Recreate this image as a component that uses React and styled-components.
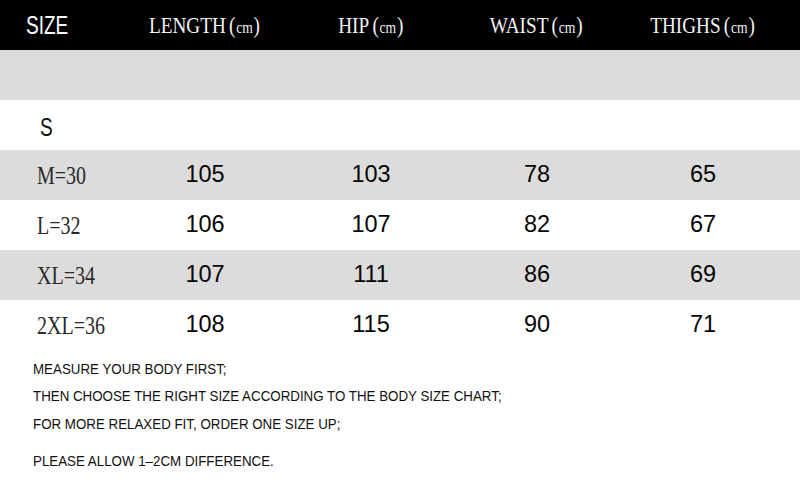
import React from "react";
import styled, { createGlobalStyle } from "styled-components";

const Global = createGlobalStyle`
  html, body { margin: 0; padding: 0; background: #ffffff; }
  body { width: 800px; height: 500px; overflow: hidden; }
`;

const Page = styled.div`
  width: 800px;
  height: 500px;
  background: #ffffff;
  display: flex;
  flex-direction: column;
`;

const Row = styled.div`
  display: grid;
  grid-template-columns: 122px repeat(4, 166px) 1fr;
  height: 50px;
  align-items: center;
  background: ${(p) => (p.$tone === "dark" ? "#000000" : p.$tone === "grey" ? "#dcdcdc" : "#ffffff")};
`;

const LabelCell = styled.div`
  padding-left: ${(p) => p.$pad}px;
  display: flex;
  align-items: center;
  height: 100%;
  padding-top: ${(p) => p.$drop || 0}px;
  box-sizing: border-box;
`;

const Cell = styled.div`
  display: flex;
  justify-content: center;
  align-items: center;
  height: 100%;
`;

const NarrowSans = styled.span`
  display: inline-block;
  font-family: "Liberation Sans", Arial, sans-serif;
  font-size: 25px;
  line-height: 1;
  color: ${(p) => p.$color};
  transform: scaleX(0.76);
  transform-origin: left center;
  white-space: nowrap;
`;

const SerifHead = styled.span`
  display: inline-block;
  font-family: "Liberation Serif", "Times New Roman", serif;
  font-size: 24px;
  line-height: 1;
  color: #f2f2f2;
  transform: scaleX(0.8);
  transform-origin: center center;
  white-space: nowrap;
`;

const Paren = styled.span`
  font-size: 24px;
  margin: 0 1px;
  &:first-of-type { margin-left: 4px; }
`;

const Unit = styled.span`
  font-size: 17px;
`;

const SizeLabel = styled.span`
  display: inline-block;
  font-family: "Liberation Serif", "Times New Roman", serif;
  font-size: 25px;
  line-height: 1;
  color: #2a2a2a;
  transform: scaleX(0.8);
  transform-origin: left center;
  white-space: nowrap;
`;

const Value = styled.span`
  font-family: "Liberation Sans", Arial, sans-serif;
  font-size: 23.5px;
  line-height: 1;
  color: #050505;
`;

const Notes = styled.div`
  display: flex;
  flex-direction: column;
  padding: 12px 0 0 33px;
`;

const Note = styled.div`
  font-family: "Liberation Sans", Arial, sans-serif;
  font-size: 15.5px;
  line-height: 14px;
  color: #111111;
  height: 14px;
  margin-bottom: ${(p) => p.$gap}px;
  white-space: nowrap;
  transform: scaleX(0.86);
  transform-origin: left center;
`;

const headers = ["LENGTH", "HIP", "WAIST", "THIGHS"];

const rows = [
  { size: "M=30", values: ["105", "103", "78", "65"] },
  { size: "L=32", values: ["106", "107", "82", "67"] },
  { size: "XL=34", values: ["107", "111", "86", "69"] },
  { size: "2XL=36", values: ["108", "115", "90", "71"] },
];

const notes = [
  { text: "MEASURE YOUR BODY FIRST;", gap: 13 },
  { text: "THEN CHOOSE THE RIGHT SIZE ACCORDING TO THE BODY SIZE CHART;", gap: 14 },
  { text: "FOR MORE RELAXED FIT, ORDER ONE SIZE UP;", gap: 23 },
  { text: "PLEASE ALLOW 1–2CM DIFFERENCE.", gap: 0 },
];

export default function App() {
  return (
    <Page>
      <Global />
      <Row $tone="dark">
        <LabelCell $pad={26}>
          <NarrowSans $color="#ffffff">SIZE</NarrowSans>
        </LabelCell>
        {headers.map((h) => (
          <Cell key={h}>
            <SerifHead>
              {h}
              <Paren>(</Paren>
              <Unit>cm</Unit>
              <Paren>)</Paren>
            </SerifHead>
          </Cell>
        ))}
      </Row>
      <Row $tone="grey" />
      <Row>
        <LabelCell $pad={40} $drop={5}>
          <NarrowSans $color="#111111">S</NarrowSans>
        </LabelCell>
      </Row>
      {rows.map((r, i) => (
        <Row key={r.size} $tone={i % 2 === 0 ? "grey" : "white"}>
          <LabelCell $pad={37}>
            <SizeLabel>{r.size}</SizeLabel>
          </LabelCell>
          {r.values.map((v, j) => (
            <Cell key={j}>
              <Value>{v}</Value>
            </Cell>
          ))}
        </Row>
      ))}
      <Notes>
        {notes.map((n) => (
          <Note key={n.text} $gap={n.gap}>
            {n.text}
          </Note>
        ))}
      </Notes>
    </Page>
  );
}
